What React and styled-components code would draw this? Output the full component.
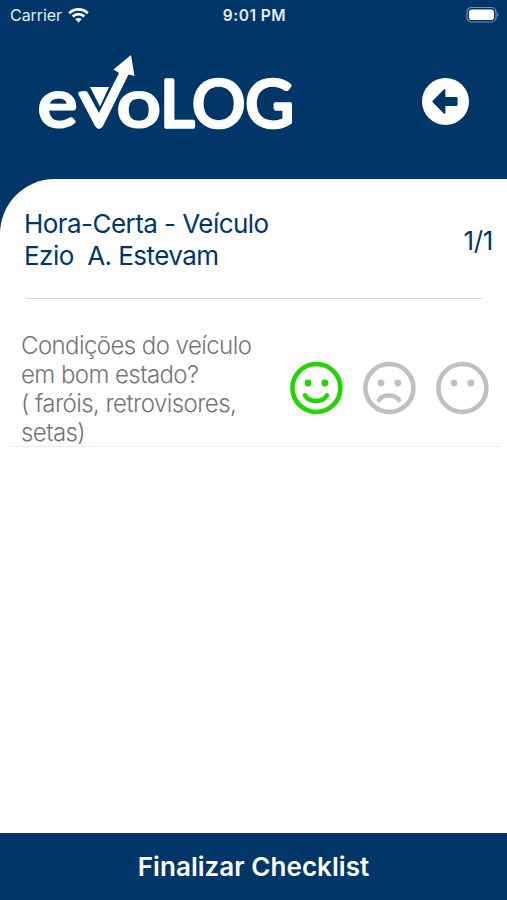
import React, { useState } from "react"
import styled, { createGlobalStyle } from "styled-components"

const colors = {
  navy: "#003668",
  white: "#ffffff",
  gray: "#757575",
  icon: "#c0c0c0",
  green: "#22d400",
}

const GlobalStyle = createGlobalStyle`
  * {
    box-sizing: border-box;
  }
  body {
    margin: 0;
    font-family: Inter, "Liberation Sans", sans-serif;
    background: ${colors.white};
  }
`
const Screen = styled.div`
  display: flex;
  flex-direction: column;
  width: 507px;
  height: 900px;
  overflow: hidden;
  background: ${colors.navy};
`
const StatusBar = styled.div`
  display: grid;
  grid-template-columns: 1fr auto 1fr;
  align-items: center;
  height: 30px;
  padding: 0 8px 0 10px;
  color: #e4ecf4;
  font-size: 16px;
  line-height: 20px;
`
const Carrier = styled.div`
  display: flex;
  align-items: center;
  gap: 6px;
  letter-spacing: -0.05px;
`
const Clock = styled.div`
  padding-top: 1px;
  font-weight: 600;
  font-size: 15.5px;
  letter-spacing: 0.5px;
`
const Battery = styled.svg`
  justify-self: end;
`
const Header = styled.header`
  display: flex;
  align-items: flex-start;
  justify-content: space-between;
  height: 149px;
  padding: 20px 38px 0 34px;
`
const BackButton = styled.button`
  width: 47px;
  height: 47px;
  margin-top: 28px;
  padding: 0;
  border: 0;
  border-radius: 50%;
  background: ${colors.white};
  svg {
    display: block;
  }
`
const Panel = styled.main`
  display: flex;
  flex: 1;
  flex-direction: column;
  padding-top: 29px;
  border-top-left-radius: 55px;
  background: ${colors.white};
`
const Summary = styled.div`
  display: flex;
  align-items: center;
  justify-content: space-between;
  height: 64px;
  padding: 0 14px 0 24px;
  color: ${colors.navy};
`
const Title = styled.h1`
  margin: 0;
  font-size: 26px;
  font-weight: 400;
  line-height: 32px;
  letter-spacing: -0.55px;
  white-space: pre;
`
const Counter = styled.div`
  font-size: 26px;
  letter-spacing: -0.3px;
`
const Divider = styled.div`
  height: 1px;
  margin: 26px 25px 0 26px;
  background: #d8d8d8;
`
const Question = styled.div`
  display: flex;
  align-items: center;
  justify-content: space-between;
  height: 117px;
  margin: 31px 7px 0 8px;
  padding: 0 11px 0 13px;
  border-bottom: 1px solid #ececec;
`
const QuestionText = styled.p`
  margin: 2px 0 0;
  color: ${colors.gray};
  font-size: 24px;
  font-weight: 350;
  line-height: 29px;
  letter-spacing: -0.57px;
  white-space: pre-line;
`
const Answers = styled.div`
  display: flex;
  gap: 19px;
`
const Answer = styled.button`
  width: 54px;
  height: 54px;
  padding: 0;
  border: 0;
  background: none;
  color: ${({ $active }) => ($active ? colors.green : colors.icon)};
  svg {
    display: block;
  }
`
const Finish = styled.button`
  height: 67px;
  padding: 0 0 1px;
  border: 0;
  background: ${colors.navy};
  color: ${colors.white};
  font-family: inherit;
  font-size: 26px;
  font-weight: 600;
  letter-spacing: 0.05px;
`

const Wifi = () => (
  <svg width="21" height="16" viewBox="0 0 21 16" fill="none">
    <g stroke="#fff" strokeWidth="2.7">
      <path d="M1.2 6.2C6.5 1.1 14.5 1.1 19.8 6.2" />
      <path d="M4.7 9.5C8 6.4 13 6.4 16.3 9.5" />
    </g>
    <path d="M7.2 12.1C9.2 10.5 11.8 10.5 13.8 12.1L10.5 15.4Z" fill="#fff" />
  </svg>
)

const Logo = () => (
  <svg width="264" height="98" viewBox="34 50 264 98" role="img">
    <g
      fill="#fff"
      stroke="#fff"
      strokeWidth="3"
      strokeLinejoin="round"
      fontFamily="Lato, sans-serif"
      fontWeight="400"
    >
      <text x="37.5" y="126.5" fontSize="68" textLength="40" lengthAdjust="spacingAndGlyphs">e</text>
      <text x="116.5" y="126.5" fontSize="68" textLength="44.5" lengthAdjust="spacingAndGlyphs">o</text>
      <text x="160" y="126.5" fontSize="65" strokeWidth="3.6" textLength="134" lengthAdjust="spacingAndGlyphs">LOG</text>
    </g>
    {/* arrow rising out of the check mark */}
    <path
      d="M80 91.5L85 91Q87 91 88 93L99 113L119 73L113.5 69.5L131 55L134.5 76L128.5 74.5L103 126Q99 132 95 126L78.5 94.5Q77.5 92 80 91.5Z"
      fill="#fff"
    />
    <path d="M90 87H109L100 106.5Z" fill="#fff" />
  </svg>
)

const mouths = {
  good: "M16 34.5C21 41.8 33 41.8 38 34.5",
  bad: "M17 39C21 33 33 33 37 39",
}

const Face = ({ mood }) => (
  <svg width="54" height="54" viewBox="0 0 54 54" fill="none">
    <circle cx="27.4" cy="27" r="24" stroke="currentColor" strokeWidth="4.6" />
    <circle cx="19" cy="22" r="3.4" fill="currentColor" />
    <circle cx="35.8" cy="22" r="3.4" fill="currentColor" />
    {mouths[mood] && (
      <path
        d={mouths[mood]}
        stroke="currentColor"
        strokeWidth="4.6"
        strokeLinecap="round"
      />
    )}
  </svg>
)

const App = () => {
  const [answer, setAnswer] = useState("good")

  return (
    <Screen>
      <GlobalStyle />
      <StatusBar>
        <Carrier>
          Carrier <Wifi />
        </Carrier>
        <Clock>9:01 PM</Clock>
        <Battery width="33" height="18" viewBox="0 0 33 18">
          <rect x="1" y="1.5" width="29" height="14.5" rx="4.5" fill="none" stroke="#7894af" strokeWidth="1.2" />
          <rect x="3" y="3.5" width="25" height="10.5" rx="2.8" fill="#fff" />
          <path d="M31.3 6.5Q33.6 8.7 31.3 11Z" fill="#7894af" />
        </Battery>
      </StatusBar>
      <Header>
        <Logo />
        <BackButton aria-label="Voltar">
          <svg width="47" height="47" viewBox="0 0 47 47">
            <path
              d="M10.9 22.6L21.9 11.4Q23.4 10.4 23.4 12.4V19H34.4Q35.6 19 35.6 20.4V26.6Q35.6 28 34.4 28H23.4V34.6Q23.4 36.6 21.9 35.6L10.9 24.4Q10 23.5 10.9 22.6Z"
              fill={colors.navy}
            />
          </svg>
        </BackButton>
      </Header>
      <Panel>
        <Summary>
          <div>
            <Title>Hora-Certa - Veículo</Title>
            <Title>{"Ezio  A. Estevam"}</Title>
          </div>
          <Counter>1/1</Counter>
        </Summary>
        <Divider />
        <Question>
          <QuestionText>
            {"Condições do veículo\nem bom estado?\n( faróis, retrovisores,\nsetas)"}
          </QuestionText>
          <Answers>
            {["good", "bad", "none"].map(mood => (
              <Answer
                key={mood}
                $active={answer === mood}
                onClick={() => setAnswer(mood)}
              >
                <Face mood={mood} />
              </Answer>
            ))}
          </Answers>
        </Question>
      </Panel>
      <Finish>Finalizar Checklist</Finish>
    </Screen>
  )
}

export default App
